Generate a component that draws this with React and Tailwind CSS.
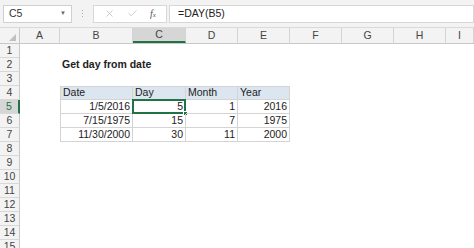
import { X, Check } from "lucide-react";

const cols = [
  { key: "A", w: "w-[40px]" },
  { key: "B", w: "w-[73px]" },
  { key: "C", w: "w-[53px]" },
  { key: "D", w: "w-[52px]" },
  { key: "E", w: "w-[52px]" },
  { key: "F", w: "w-[52px]" },
  { key: "G", w: "w-[52px]" },
  { key: "H", w: "w-[52px]" },
  { key: "I", w: "w-[28px]" },
];

// table data, keyed by row then column
const cells = {
  2: { B: { v: "Get day from date", bold: true } },
  4: { B: { v: "Date" }, C: { v: "Day" }, D: { v: "Month" }, E: { v: "Year" } },
  5: { B: { v: "1/5/2016", r: true }, C: { v: "5", r: true }, D: { v: "1", r: true }, E: { v: "2016", r: true } },
  6: { B: { v: "7/15/1975", r: true }, C: { v: "15", r: true }, D: { v: "7", r: true }, E: { v: "1975", r: true } },
  7: { B: { v: "11/30/2000", r: true }, C: { v: "30", r: true }, D: { v: "11", r: true }, E: { v: "2000", r: true } },
};

const tableCols = ["B", "C", "D", "E"];

function Cell({ col, row }) {
  const data = cells[row]?.[col.key];
  const inTable = row >= 4 && row <= 7 && tableCols.includes(col.key);
  const selected = row === 5 && col.key === "C";
  let cls = `${col.w} h-full shrink-0 relative flex items-center px-[2px] text-[10.5px] text-[#222]`;
  if (inTable) {
    cls += " border-r border-b border-[#d4d4d4]";
    if (col.key === "B") cls += " border-l";
    if (row === 4) cls += " border-t bg-[#dce6f1]";
  }
  if (data?.r) cls += " justify-end";
  if (data?.bold) cls += " font-bold whitespace-nowrap overflow-visible";
  return (
    <div className={cls}>
      {data && <span className={data.bold ? "absolute left-[2px]" : ""}>{data.v}</span>}
      {selected && (
        <>
          <div className="absolute -inset-[1px] border-2 border-[#217346]" />
          <div className="absolute -right-[3px] -bottom-[3px] w-[5px] h-[5px] bg-[#217346] border border-white" />
        </>
      )}
    </div>
  );
}

export default function App() {
  const rows = Array.from({ length: 15 }, (_, i) => i + 1);
  return (
    <div
      className="w-[474px] h-[248px] overflow-hidden bg-white"
      style={{ fontFamily: '"Liberation Sans", Arial, sans-serif' }}
    >
      {/* formula bar */}
      <div className="h-[28px] bg-[#f3f3f3] border-b border-[#dadada] flex items-center pl-[3px] gap-0">
        <div className="w-[69px] h-[18px] bg-white border border-[#d0d0d0] flex items-center justify-between px-[5px] text-[10.5px] text-[#333]">
          <span>C5</span>
          <span className="text-[6px] text-[#666]">▼</span>
        </div>
        <div className="w-[21px] flex flex-col items-center gap-[2px]">
          <div className="w-[1px] h-[1px] bg-[#aaa]" />
          <div className="w-[1px] h-[1px] bg-[#aaa]" />
          <div className="w-[1px] h-[1px] bg-[#aaa]" />
        </div>
        <div className="w-[74px] h-[18px] bg-white border border-[#d8d8d8] flex items-center justify-around px-[4px]">
          <X size={11} strokeWidth={1.5} className="text-[#b5b5b5]" />
          <Check size={11} strokeWidth={1.5} className="text-[#b5b5b5]" />
          <span
            className="text-[10px] italic text-[#555]"
            style={{ fontFamily: '"Liberation Serif", serif' }}
          >
            f<span className="text-[7px]">x</span>
          </span>
        </div>
        <div className="ml-[2px] flex-1 h-[18px] bg-white border border-[#d8d8d8] flex items-center pl-[8px] text-[10.5px] text-[#222]">
          =DAY(B5)
        </div>
      </div>

      {/* column headers */}
      <div className="h-[16px] flex bg-[#f3f3f3] border-b border-[#c8c8c8]">
        <div className="w-[20px] shrink-0 h-full relative border-r border-[#c8c8c8]">
          <div className="absolute right-[3px] bottom-[2px] w-0 h-0 border-l-[7px] border-l-transparent border-b-[7px] border-b-[#c0c0c0]" />
        </div>
        {cols.map((c) => (
          <div
            key={c.key}
            className={`${c.w} shrink-0 h-full flex items-center justify-center text-[10.5px] text-[#444] border-r border-[#d4d4d4] ${
              c.key === "C" ? "bg-[#d6d6d6] border-b-2 border-b-[#217346]" : ""
            }`}
          >
            {c.key}
          </div>
        ))}
      </div>

      {/* rows */}
      {rows.map((r) => (
        <div key={r} className="h-[14px] flex">
          <div
            className={`w-[20px] shrink-0 h-full flex items-center justify-center text-[10.5px] border-b border-[#d8d8d8] ${
              r === 5
                ? "bg-[#d6d6d6] text-[#217346] border-r-2 border-r-[#217346]"
                : "bg-[#f3f3f3] text-[#444] border-r border-r-[#c8c8c8]"
            }`}
          >
            {r}
          </div>
          {cols.map((c) => (
            <Cell key={c.key} col={c} row={r} />
          ))}
        </div>
      ))}
    </div>
  );
}
